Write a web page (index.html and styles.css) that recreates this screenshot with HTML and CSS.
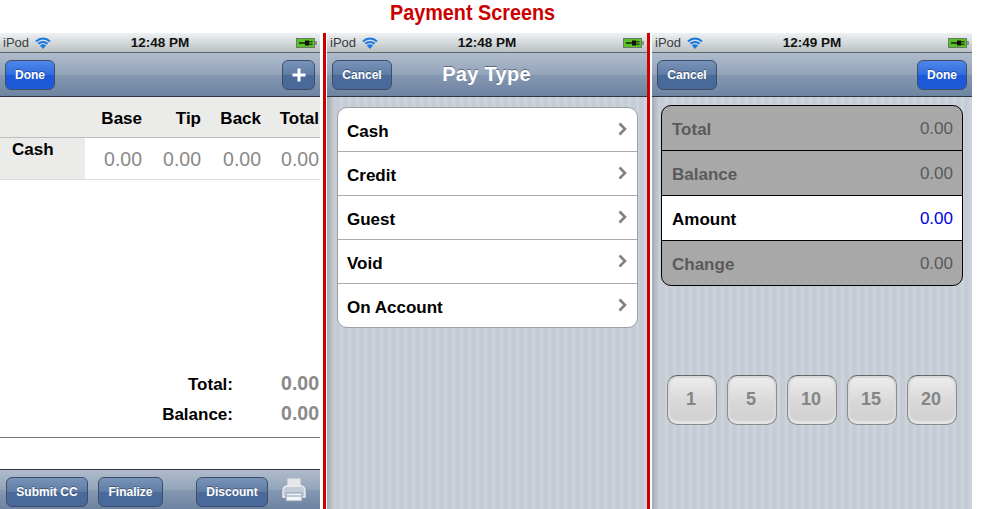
FILE: index.html
```html
<!DOCTYPE html>
<html lang="en">
<head>
    <meta charset="UTF-8">
    <meta name="viewport" content="width=device-width, initial-scale=1.0">
    <title>Payment Screens</title>
    <link rel="stylesheet" href="styles.css">
</head>
<body>
    <svg class="defs" width="0" height="0">
        <symbol id="wifi" viewBox="0 0 16 12">
            <path d="M1 4.4C5 .6 11 .6 15 4.4M3.4 6.7C6 4.3 10 4.3 12.6 6.7" fill="none" stroke="#1a78e0" stroke-width="2"/>
            <path d="M4.9 8.6C7 6.7 9 6.7 11.1 8.6L8 12Z" fill="#1a78e0"/>
        </symbol>
        <symbol id="battery" viewBox="0 0 21 10">
            <rect x=".5" y=".5" width="18" height="9" fill="#58c322" stroke="#6b7a6b"/>
            <rect x="19" y="3" width="2" height="4" fill="#8a948a"/>
            <path d="M3 5H9" stroke="#111" stroke-width="1.4"/>
            <path d="M9 2.5H13V7.5H9Z" fill="#111"/>
            <path d="M13 3.8H16.5M13 6.2H16.5" stroke="#111" stroke-width="1"/>
        </symbol>
    </svg>

    <h1 class="page-title">Payment Screens</h1>

    <div class="screens">
        <!-- Payment list -->
        <div class="screen plain">
            <div class="status">
                <span class="carrier">iPod <svg class="wifi"><use href="#wifi"/></svg></span>
                <span class="clock">12:48 PM</span>
                <svg class="battery"><use href="#battery"/></svg>
            </div>
            <div class="navbar">
                <button class="btn btn-done">Done</button>
                <button class="btn btn-plus">
                    <svg width="14" height="14" viewBox="0 0 14 14"><path d="M7 .5V13.5M.5 7H13.5" stroke="#fff" stroke-width="3"/></svg>
                </button>
            </div>
            <div class="pay-grid pay-head">
                <span></span><span>Base</span><span>Tip</span><span>Back</span><span>Total</span>
            </div>
            <div class="pay-grid pay-row">
                <span class="pay-name">Cash</span><span>0.00</span><span>0.00</span><span>0.00</span><span>0.00</span>
            </div>
            <div class="spacer"></div>
            <div class="sum"><span>Total:</span><span class="sum-val">0.00</span></div>
            <div class="sum"><span>Balance:</span><span class="sum-val">0.00</span></div>
            <div class="sum-rule"></div>
            <div class="toolbar">
                <button class="btn tool-submit">Submit CC</button>
                <button class="btn tool-final">Finalize</button>
                <button class="btn tool-disc">Discount</button>
                <svg class="printer" width="24" height="25" viewBox="0 0 24 25">
                    <path d="M5 1H19V10H5Z" fill="#e4e6ea" stroke="#aab4c4"/>
                    <path d="M1 15C1 11 3 9 5 9H19C21 9 23 11 23 15V20H1Z" fill="#c3ccd8" stroke="#eef0f3" stroke-width="1.4"/>
                    <path d="M4 16H20V24H4Z" fill="#f4f5f6" stroke="#8c9ab0"/>
                    <path d="M4 19H20" stroke="#8c9ab0"/>
                </svg>
            </div>
        </div>

        <div class="divider"></div>

        <!-- Pay type -->
        <div class="screen striped">
            <div class="status">
                <span class="carrier">iPod <svg class="wifi"><use href="#wifi"/></svg></span>
                <span class="clock">12:48 PM</span>
                <svg class="battery"><use href="#battery"/></svg>
            </div>
            <div class="navbar">
                <button class="btn btn-cancel">Cancel</button>
                <span class="nav-title">Pay Type</span>
            </div>
            <ul class="type-list">
                <li>Cash<svg class="chev" viewBox="0 0 9 14"><path d="M1.5 1.5L7 7L1.5 12.5" fill="none" stroke="#808080" stroke-width="2.6"/></svg></li>
                <li>Credit<svg class="chev" viewBox="0 0 9 14"><path d="M1.5 1.5L7 7L1.5 12.5" fill="none" stroke="#808080" stroke-width="2.6"/></svg></li>
                <li>Guest<svg class="chev" viewBox="0 0 9 14"><path d="M1.5 1.5L7 7L1.5 12.5" fill="none" stroke="#808080" stroke-width="2.6"/></svg></li>
                <li>Void<svg class="chev" viewBox="0 0 9 14"><path d="M1.5 1.5L7 7L1.5 12.5" fill="none" stroke="#808080" stroke-width="2.6"/></svg></li>
                <li>On Account<svg class="chev" viewBox="0 0 9 14"><path d="M1.5 1.5L7 7L1.5 12.5" fill="none" stroke="#808080" stroke-width="2.6"/></svg></li>
            </ul>
        </div>

        <div class="divider divider-2"></div>

        <!-- Amount entry -->
        <div class="screen striped">
            <div class="status">
                <span class="carrier">iPod <svg class="wifi"><use href="#wifi"/></svg></span>
                <span class="clock">12:49 PM</span>
                <svg class="battery"><use href="#battery"/></svg>
            </div>
            <div class="navbar">
                <button class="btn btn-cancel">Cancel</button>
                <button class="btn btn-done">Done</button>
            </div>
            <div class="amounts">
                <div class="amount-row"><span>Total</span><span class="amount-val">0.00</span></div>
                <div class="amount-row"><span>Balance</span><span class="amount-val">0.00</span></div>
                <div class="amount-row active"><span>Amount</span><span class="amount-val">0.00</span></div>
                <div class="amount-row"><span>Change</span><span class="amount-val">0.00</span></div>
            </div>
            <div class="keys">
                <button class="key">1</button>
                <button class="key">5</button>
                <button class="key">10</button>
                <button class="key">15</button>
                <button class="key">20</button>
            </div>
        </div>
    </div>
</body>
</html>
```

FILE: styles.css
```css
/* Basic page */
html, body {
    margin: 0;
    height: 509px;
    overflow: hidden;
    background: #fff;
}

body {
    font-family: "Liberation Sans", Arial, sans-serif;
}

.defs {
    display: block;
    height: 0;
}

.page-title {
    margin: 0;
    height: 33px;
    width: 945px;
    line-height: 26px;
    font-size: 22px;
    font-weight: bold;
    text-align: center;
    color: #cc0000;
    transform: scaleX(.9);
}

.screens {
    display: flex;
    height: 476px;
}

.screen {
    width: 320px;
    flex: none;
    display: flex;
    flex-direction: column;
}

.plain {
    background: #fff;
}

/* Pinstripe background on the grouped screens */
.striped {
    background:
        linear-gradient(90deg, #a3abb5 0, #bcc3cc 5px, transparent 8px),
        repeating-linear-gradient(90deg, #c5ccd5 0, #c5ccd5 5px, #ccd3db 5px, #ccd3db 8px);
}

.divider {
    width: 3px;
    flex: none;
    margin: 0 1px 0 3px;
    background: #cc0000;
}

.divider-2 {
    margin: 0 2px 0 0;
}

/* Status bar */
.status {
    height: 19px;
    flex: none;
    display: grid;
    grid-template-columns: 1fr auto 1fr;
    align-items: center;
    padding: 0 3px;
    background: linear-gradient(#eff2f3, #b9c0c3);
    border-bottom: 1px solid #5f666c;
    font-size: 13px;
}

.carrier {
    display: flex;
    align-items: center;
    gap: 6px;
    color: #3c3c3c;
}

.wifi {
    width: 16px;
    height: 12px;
}

.clock {
    font-size: 13.5px;
    font-weight: bold;
    color: #111;
}

.battery {
    width: 21px;
    height: 10px;
    justify-self: end;
}

/* Navigation bar */
.navbar {
    height: 44px;
    flex: none;
    display: flex;
    align-items: flex-start;
    justify-content: space-between;
    padding: 7px 5px 0;
    box-sizing: border-box;
    background: linear-gradient(#b0bccd 0, #93a4ba 50%, #8598b2 52%, #6d83a1 100%);
    border-bottom: 1px solid #2d3642;
    position: relative;
}

.nav-title {
    position: absolute;
    left: -1px;
    right: 0;
    top: 10px;
    text-align: center;
    font-size: 20px;
    font-weight: bold;
    letter-spacing: .3px;
    color: #fff;
    text-shadow: 0 -1px 0 rgba(0, 0, 0, .4);
}

.btn {
    height: 30px;
    padding: 0;
    border: 1px solid #3d4f68;
    border-radius: 6px;
    font-family: inherit;
    font-size: 12px;
    font-weight: bold;
    color: #fff;
    text-shadow: 0 -1px 0 rgba(0, 0, 0, .35);
    background: linear-gradient(#7a94b8 0, #5d7ba4 50%, #4a6b9a 50%, #476899 100%);
    position: relative;
    z-index: 1;
}

.btn-done {
    width: 50px;
    background: linear-gradient(#4f86e8 0, #2f6ce0 50%, #1c58d8 50%, #1e5cdc 100%);
}

.btn-plus {
    width: 33px;
    display: flex;
    align-items: center;
    justify-content: center;
}

.btn-cancel {
    width: 60px;
}

/* Payment table */
.pay-grid {
    display: grid;
    grid-template-columns: 83px 59px 59px 60px 58px;
    text-align: right;
    flex: none;
}

.pay-head {
    height: 40px;
    line-height: 44px;
    background: #ebebe9;
    border-bottom: 1px solid #bdbdbd;
    font-size: 17px;
    font-weight: bold;
    color: #000;
}

.pay-row {
    height: 41px;
    line-height: 43px;
    background: linear-gradient(90deg, #ebebe9 85px, #fff 85px);
    border-bottom: 1px solid #dedede;
    font-size: 19.5px;
    color: #8a8a8a;
}

.pay-row .pay-name {
    text-align: left;
    padding-left: 12px;
    font-size: 17px;
    font-weight: bold;
    line-height: 24px;
    color: #000;
}

.spacer {
    flex: 1;
}

.sum {
    display: flex;
    justify-content: flex-end;
    align-items: baseline;
    height: 30px;
    line-height: 30px;
    flex: none;
    padding-right: 1px;
    font-size: 17px;
    font-weight: bold;
    color: #000;
}

.sum-val {
    width: 86px;
    text-align: right;
    font-size: 19.5px;
    color: #8a8a8a;
}

.sum-rule {
    height: 1px;
    margin-top: 9px;
    margin-bottom: 31px;
    flex: none;
    background: #777;
}

/* Bottom toolbar */
.toolbar {
    height: 32px;
    flex: none;
    display: flex;
    align-items: flex-start;
    padding: 7px 0 0 6px;
    background: linear-gradient(#b0bccd 0, #93a4ba 50%, #8598b2 52%, #6d83a1 100%);
    border-top: 1px solid #2d3642;
}

.tool-submit {
    width: 82px;
    margin-right: 10px;
}

.tool-final {
    width: 65px;
    margin-right: 33px;
}

.tool-disc {
    width: 72px;
    margin-right: 14px;
}

/* Pay type list */
.type-list {
    list-style: none;
    margin: 10px 9px 0 10px;
    padding: 0;
    background: #fff;
    border: 1px solid #9aa0a8;
    border-radius: 10px;
}

.type-list li {
    height: 39px;
    display: flex;
    align-items: center;
    justify-content: space-between;
    padding: 4px 10px 0 9px;
    border-bottom: 1px solid #ababab;
    font-size: 17px;
    font-weight: bold;
    color: #000;
}

.type-list li:last-child {
    border-bottom: none;
}

.chev {
    width: 9px;
    height: 14px;
    margin-top: -5px;
}

/* Amount panel */
.amounts {
    margin: 8px 9px 0 9px;
    border: 1px solid #000;
    border-radius: 10px;
    overflow: hidden;
    background: #a8a8a8;
}

.amount-row {
    height: 40px;
    padding: 4px 9px 0 10px;
    display: flex;
    align-items: center;
    justify-content: space-between;
    border-bottom: 1px solid #000;
    font-size: 17px;
    font-weight: bold;
    color: #5a5a5a;
}

.amount-row:last-child {
    border-bottom: none;
}

.amount-val {
    font-size: 17px;
    font-weight: normal;
    margin-top: -3px;
}

.active {
    background: #fff;
    color: #000;
}

.active .amount-val {
    color: #0000e6;
}

/* Quick amount keys */
.keys {
    display: flex;
    gap: 10px;
    margin: 89px 0 0 15px;
}

.key {
    width: 50px;
    height: 50px;
    padding: 0 2px 2px 0;
    border: 1px solid #8a8a8a;
    border-top-color: #666;
    border-radius: 10px;
    font-family: inherit;
    font-size: 18px;
    font-weight: bold;
    color: #858585;
    background: linear-gradient(#eeeeee, #d8d8d8 55%, #cfcfcf);
    box-shadow: inset 0 -3px 2px #e4e4e4, inset 0 0 0 2px #d8d8d8;
}
```
